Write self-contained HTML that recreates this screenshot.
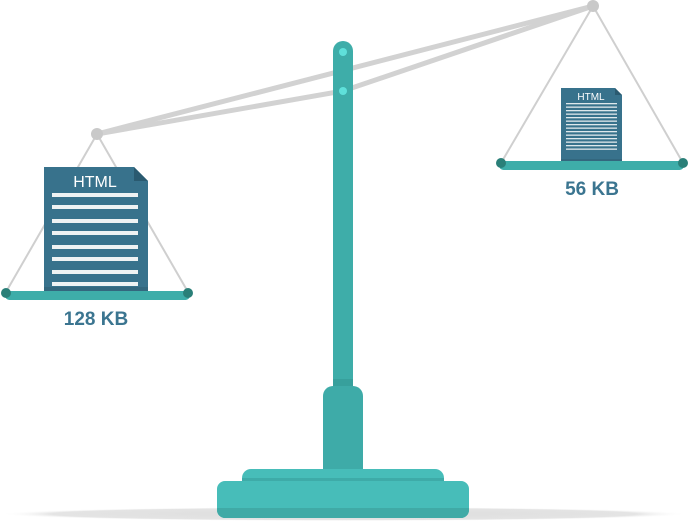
<!DOCTYPE html>
<html><head><meta charset="utf-8"><style>
html,body{margin:0;padding:0;background:#fff;width:688px;height:521px;overflow:hidden}
</style></head><body>
<svg width="688" height="521" viewBox="0 0 688 521" xmlns="http://www.w3.org/2000/svg">
<defs>
<radialGradient id="sh" cx="0.5" cy="0.5" r="0.5">
<stop offset="0" stop-color="#dcdcdc"/><stop offset="0.85" stop-color="#e4e4e4"/><stop offset="1" stop-color="#fff" stop-opacity="0"/>
</radialGradient>
</defs>
<ellipse cx="344" cy="514" rx="344" ry="7" fill="url(#sh)"/>
<!-- strings -->
<g stroke="#cfcfcf" stroke-width="2" fill="none">
<line x1="97" y1="134" x2="6" y2="292"/>
<line x1="97" y1="134" x2="188" y2="292"/>
<line x1="593" y1="6" x2="501" y2="163"/>
<line x1="593" y1="6" x2="683" y2="163"/>
</g>
<!-- beams -->
<g stroke="#d2d2d2" stroke-width="5" stroke-linecap="round" fill="none">
<line x1="97" y1="134" x2="593" y2="6"/>
<polyline points="97,134 343,91 593,6"/>
</g>
<circle cx="97" cy="134" r="6" fill="#c9c9c9"/>
<circle cx="593" cy="6" r="6" fill="#c9c9c9"/>
<!-- pillar -->
<rect x="333" y="41" width="20" height="350" rx="10" fill="#3eada9"/>
<rect x="333" y="379" width="20" height="8" fill="#37a09c"/>
<circle cx="343" cy="52" r="4" fill="#5fe0da"/>
<circle cx="343" cy="91" r="4" fill="#5fe0da"/>
<rect x="323" y="386" width="40" height="95" rx="10" fill="#3eaba8"/>
<rect x="242" y="469" width="202" height="20" rx="9" fill="#47bdb9"/>
<rect x="242" y="478" width="202" height="4" fill="#3eaba8"/>
<rect x="217" y="481" width="252" height="37" rx="8" fill="#47bdb9"/>
<path d="M217 508 H469 V510 a8 8 0 0 1 -8 8 H225 a8 8 0 0 1 -8 -8 Z" fill="#40aaa6"/>
<!-- left doc -->
<path d="M44 167 H134 L148 181 V292 H44 Z" fill="#38728c"/>
<path d="M134 167 L148 181 H134 Z" fill="#2a5a70"/>
<rect x="44" y="287" width="104" height="5" fill="#33677e"/>
<text x="95" y="187" font-family="Liberation Sans, sans-serif" font-size="16" fill="#fff" text-anchor="middle">HTML</text>
<g fill="#eef2f3">
<rect x="52" y="193" width="86" height="4"/><rect x="52" y="205" width="86" height="4"/>
<rect x="52" y="219" width="86" height="4"/><rect x="52" y="231" width="86" height="4"/>
<rect x="52" y="245" width="86" height="4"/><rect x="52" y="257" width="86" height="4"/>
<rect x="52" y="270" width="86" height="4"/><rect x="52" y="282" width="86" height="4"/>
</g>
<rect x="5" y="291" width="185" height="9" rx="4.5" fill="#3eada9"/>
<circle cx="6" cy="293" r="5" fill="#2a7f78"/><circle cx="188" cy="293" r="5" fill="#2a7f78"/>
<text x="96" y="325" font-family="Liberation Sans, sans-serif" font-size="19" font-weight="bold" fill="#3b7590" text-anchor="middle">128 KB</text>
<!-- right doc -->
<path d="M561 88 H615 L622 95 V162 H561 Z" fill="#38728c"/>
<path d="M615 88 L622 95 H615 Z" fill="#2a5a70"/>
<rect x="561" y="159" width="61" height="3" fill="#33677e"/>
<text x="591" y="100" font-family="Liberation Sans, sans-serif" font-size="10" fill="#fff" text-anchor="middle">HTML</text>
<g fill="#dfe8ec">
<rect x="566" y="103" width="51" height="1.3"/><rect x="566" y="106.5" width="51" height="1.3"/>
<rect x="566" y="110" width="51" height="1.3"/><rect x="566" y="113.5" width="51" height="1.3"/>
<rect x="566" y="117" width="51" height="1.3"/><rect x="566" y="120.5" width="51" height="1.3"/>
<rect x="566" y="124" width="51" height="1.3"/><rect x="566" y="127.5" width="51" height="1.3"/>
<rect x="566" y="131" width="51" height="1.3"/><rect x="566" y="134.5" width="51" height="1.3"/>
<rect x="566" y="138" width="51" height="1.3"/><rect x="566" y="141.5" width="51" height="1.3"/>
<rect x="566" y="145" width="51" height="1.3"/><rect x="566" y="148.5" width="51" height="1.3"/>
</g>
<rect x="499" y="161" width="185" height="9" rx="4.5" fill="#3eada9"/>
<circle cx="501" cy="163" r="5" fill="#2a7f78"/><circle cx="683" cy="163" r="5" fill="#2a7f78"/>
<text x="592" y="195" font-family="Liberation Sans, sans-serif" font-size="19" font-weight="bold" fill="#3b7590" text-anchor="middle">56 KB</text>
</svg>
</body></html>
